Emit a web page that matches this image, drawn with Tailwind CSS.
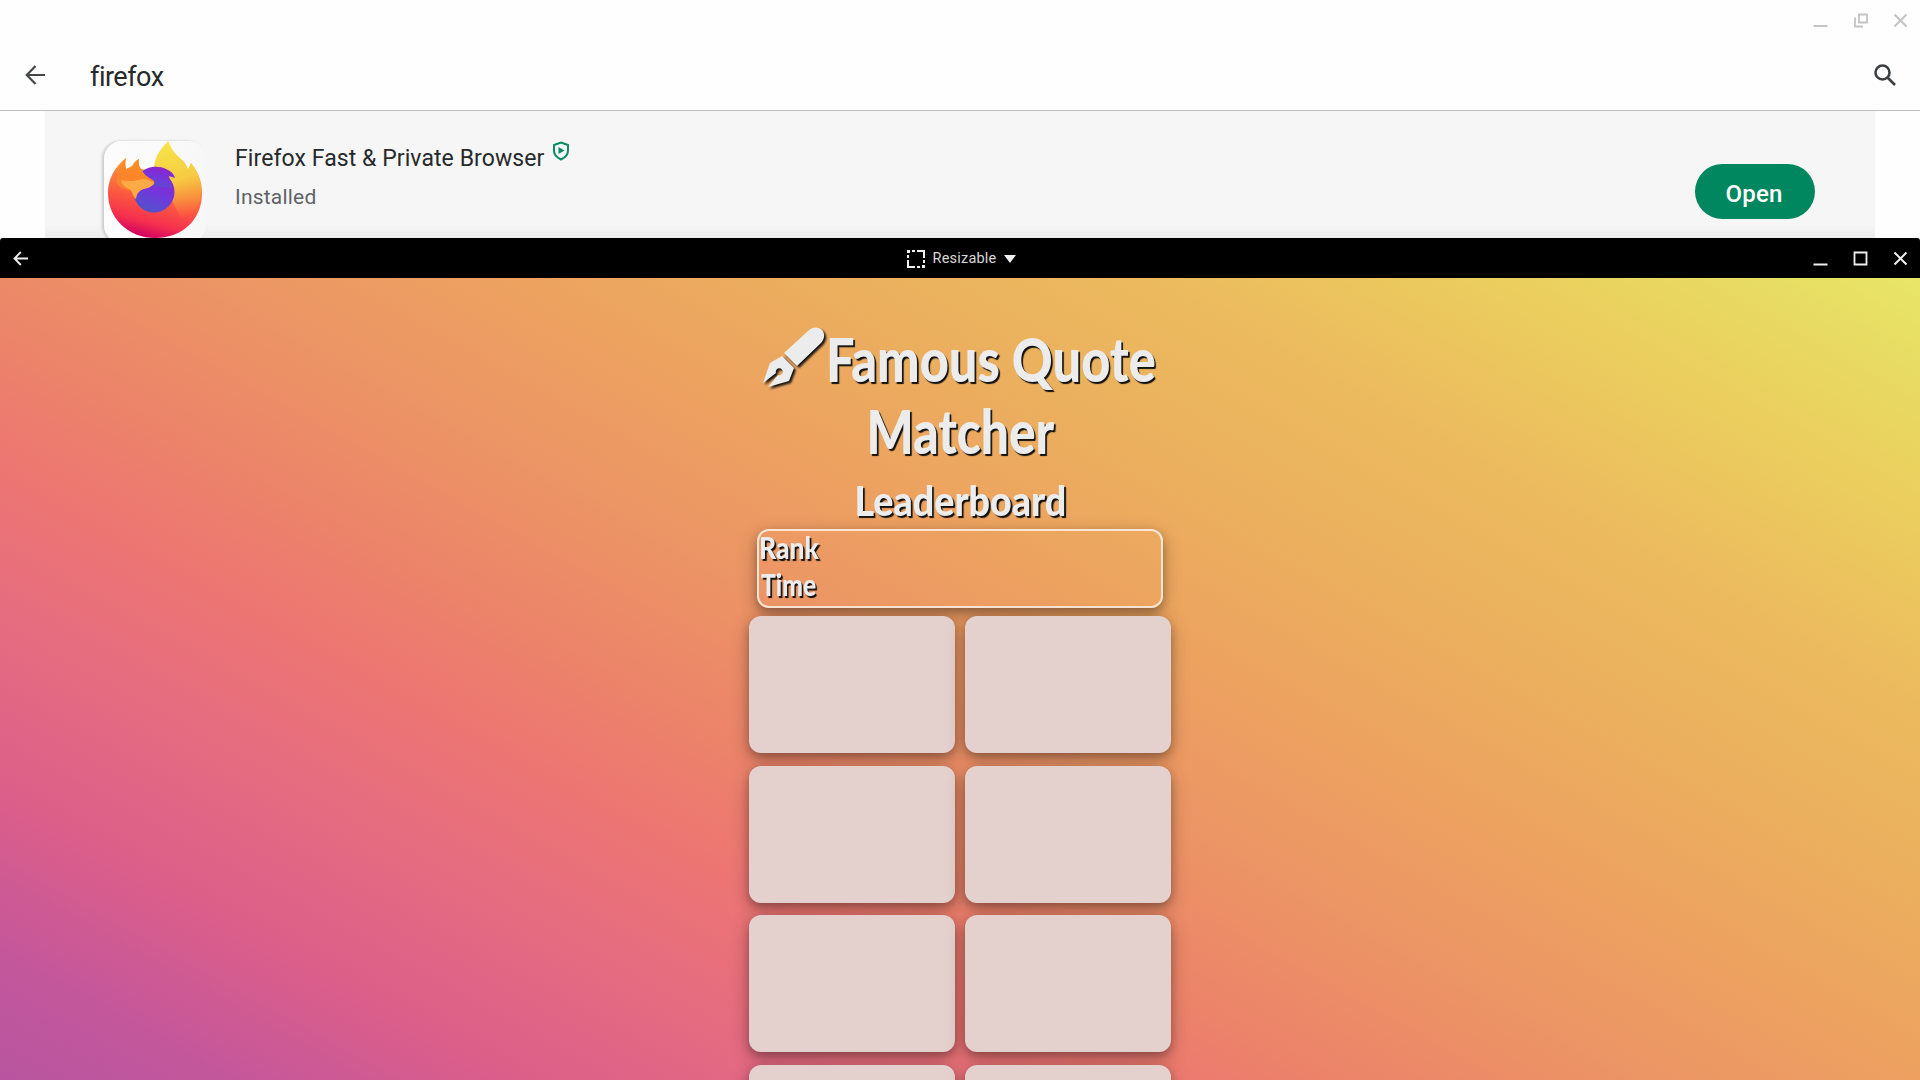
<!DOCTYPE html>
<html lang="en">
<head>
<meta charset="utf-8">
<title>Famous Quote Matcher</title>
<script src="https://cdn.jsdelivr.net/npm/@tailwindcss/browser@4"></script>
</head>
<body class="w-[1920px] h-[1080px] overflow-hidden bg-[#fefefe] font-['Roboto',sans-serif] flex flex-col">
  <section class="h-[238px] shrink-0 flex flex-col overflow-hidden">
    <div class="h-10 shrink-0 flex justify-end text-[#c4c4c4]">
      <svg class="w-10 h-10" viewBox="0 0 40 40" fill="none" stroke="currentColor" stroke-width="2"><path d="M13.500 26h14"/></svg>
      <svg class="w-10 h-10" viewBox="0 0 40 40" fill="none" stroke="currentColor" stroke-width="1.800"><path d="M19 14.500h8v8h-8zM15 17.500v9h8"/></svg>
      <svg class="w-10 h-10" viewBox="0 0 40 40" fill="none" stroke="currentColor" stroke-width="2"><path d="M14.500 14.500l12 12M26.500 14.500l-12 12"/></svg>
    </div>
    <div class="h-[71px] shrink-0 flex items-center justify-between border-b border-[#bdbdbd] pl-[25px] pr-[23px] pb-1">
      <div class="flex items-center">
        <svg class="w-[21px] h-[20px] mt-[3px]" viewBox="0 0 21 20" fill="none" stroke="#444746" stroke-width="2.200"><path d="M20 10H2M10.500 1L1.800 10l8.700 9"/></svg>
        <span class="ml-[44px] mt-[7px] text-[27px] leading-8 text-[#27292b] tracking-[-0.500px]">firefox</span>
      </div>
      <svg class="w-[24px] h-[24px] mt-[3px]" viewBox="0 0 24 24" fill="none" stroke="#3c4043" stroke-width="2.600"><circle cx="9.500" cy="9.500" r="7"/><path d="M14.500 14.500l7.500 7.500"/></svg>
    </div>
    <div class="mx-[45px] flex-1 bg-gradient-to-b from-[#f6f6f6] from-85% to-[#e9e9e9] flex pl-[59px] pr-[60px]">
      <div class="mt-[30px] w-[102px] h-[102px] shrink-0 rounded-[18px] bg-gradient-to-r from-[#fdfdfd] to-[#f7f7f7] shadow-[-2px_0_3px_rgba(0,0,0,0.180)]">
        <svg class="w-[102px] h-[102px]" viewBox="0 0 102 102">
          <defs>
            <linearGradient id="body" x1="0.700" y1="0" x2="0.450" y2="1"><stop offset="0" stop-color="#fbe040"/><stop offset="0.350" stop-color="#fb963a"/><stop offset="0.650" stop-color="#fb5640"/><stop offset="0.850" stop-color="#f5304f"/><stop offset="1" stop-color="#d4045f"/></linearGradient>
            <linearGradient id="flame" x1="0.300" y1="0" x2="0.500" y2="1"><stop offset="0" stop-color="#f7e448"/><stop offset="0.500" stop-color="#f6cc42"/><stop offset="1" stop-color="#f89a3d" stop-opacity="0"/></linearGradient>
            <linearGradient id="globe" x1="0.700" y1="0" x2="0.300" y2="1"><stop offset="0" stop-color="#8f22c8"/><stop offset="0.500" stop-color="#7436dd"/><stop offset="1" stop-color="#4e54c8"/></linearGradient>
            <linearGradient id="head" x1="0.200" y1="0" x2="0" y2="1"><stop offset="0" stop-color="#fb8d22"/><stop offset="1" stop-color="#fb7a35"/></linearGradient>
          </defs>
          <path fill="url(#body)" d="M22 17c-1 4-1 7 0 11l6-3c2-4 4-6 7-7-1 4 0 8 2 10l17 3 10-31c3 9 8 14 15 20 2 2 4 5 5 9l3-7c7 9 11 18 11 30C98 80 77 97 51 97S4 78 4 52c0-14 7-27 18-35z"/>
          <path fill="url(#flame)" d="M64 0c3 9 8 14 15 20 2 2 4 5 5 9l3-7c7 9 11 18 10 30-2 14-9 23-18 28L50 27C51 14 57 8 64 0z"/>
          <circle cx="50" cy="51" r="20.500" fill="url(#globe)"/>
          <path fill="url(#globe)" d="M35 34c6-9 19-10 27-6 5 2 8 5 9 9l-6-2 3 12-27-3z"/>
          <path fill="url(#head)" d="M22 17c-1 4-1 7 0 11l6-1c2-4 4-7 7-9-1 4 0 8 2 10 2 4 5 7 10 10 3 1 4 3 3 5-4 4-9 4-13 6-3 2-5 5-5 9-5-4-3-9-8-9-5-1-9-3-12-8 2-10 5-18 10-24z"/>
          <path fill="#fcaa45" d="M17 39c8 2 14 1 22-1 4 0 8 2 11 4-3 5-8 5-13 7-3 2-5 5-5 9-4-4-3-8-7-10-4-2-7-4-8-9z"/>
        </svg>
      </div>
      <div class="ml-[29px] mt-[30px] flex-1 whitespace-nowrap">
        <div class="flex items-start">
          <span class="text-[23px] leading-[36px] text-[#27292b] tracking-[0.080px]">Firefox Fast &amp; Private Browser</span>
          <svg class="ml-2 w-[18px] h-[20px]" viewBox="0 0 18 20"><path d="M9 1.500L16 4v5.500c0 4-2.700 7-7 9-4.300-2-7-5-7-9V4z" fill="none" stroke="#0c8a66" stroke-width="2"/><path d="M6.500 6v7l6-3.500z" fill="#0c8a66"/></svg>
        </div>
        <div class="mt-[2px] text-[21px] leading-[36px] text-[#5f6368] tracking-[0.200px]">Installed</div>
      </div>
      <button class="mt-[53px] w-[120px] h-[55px] rounded-full bg-[#01875f] text-white text-[24px] font-medium pt-[4px] pr-[2px] tracking-[0.200px]">Open</button>
    </div>
  </section>

  <header class="h-10 shrink-0 bg-black text-[#f0f0f0] grid grid-cols-3 items-center rounded-t-[3px]">
    <svg class="w-10 h-10" viewBox="0 0 40 40" fill="none" stroke="currentColor" stroke-width="1.800"><path d="M28 20.500H15M20.800 14l-6.300 6.500 6.300 6.500"/></svg>
    <div class="flex items-center justify-center gap-2 pl-[3px] pt-px">
      <svg class="w-[18px] h-[18px]" viewBox="0 0 18 18" fill="currentColor"><path d="M0 0h3v3H0zM5 0h3v2H5zM10 0h8v8h-2V2h-6zM0 5h2v3H0zM0 10h2v6h6v2H0zM10 16h3v2h-3zM15 15h3v3h-3zM16 10h2v3h-2z"/></svg>
      <span class="text-[14.500px] leading-5 tracking-[0.200px] text-[#d8d8d8]">Resizable</span>
      <svg class="w-3 h-2" viewBox="0 0 12 8" fill="currentColor"><path d="M0 0h12L6 8z"/></svg>
    </div>
    <div class="flex justify-end">
      <svg class="w-10 h-10" viewBox="0 0 40 40" fill="none" stroke="currentColor" stroke-width="2"><path d="M13.500 26.500h14"/></svg>
      <svg class="w-10 h-10" viewBox="0 0 40 40" fill="none" stroke="currentColor" stroke-width="1.800"><path d="M14.500 14.500h12v12h-12z"/></svg>
      <svg class="w-10 h-10" viewBox="0 0 40 40" fill="none" stroke="currentColor" stroke-width="2"><path d="M14.500 14.500l12 12M26.500 14.500l-12 12"/></svg>
    </div>
  </header>

  <main class="h-[802px] shrink-0 overflow-hidden flex flex-col items-center bg-[linear-gradient(29deg,#b855a0_0%,#c4579b_7%,#db5e8a_15%,#e56b81_24%,#ed7672_33%,#ec8469_40%,#ec9565_49%,#eda260_58%,#ebb05e_68%,#ecba5e_77%,#ebcf5e_88%,#e8da62_94%,#e8e668_100%)] font-['Lato',sans-serif] font-black text-[#ececec] [text-shadow:2px_2px_1px_#111]">
    <h1 class="mt-[46px] flex flex-col items-center whitespace-nowrap text-[60px] leading-[70px]">
      <span class="flex items-center">
        <svg class="-mt-1 -ml-0.5 mr-0.5 w-[62px] h-[62px] overflow-visible drop-shadow-[2px_2px_1px_#111]" viewBox="0 0 62 62" fill="currentColor"><path d="M45 5c5-5 11-4 14-1 3 3 3 9-1 13L34 40 21 27z"/><path fill-rule="evenodd" d="M19 30l12 12-5 13L5 61l10-12a3.500 3.500 0 1 0-2-2L0 57l7-20z"/></svg>
        <span class="w-[328px] flex justify-center"><span class="scale-x-[0.842]">Famous Quote</span></span>
      </span>
      <span class="relative top-0.5 scale-x-[0.827]">Matcher</span>
    </h1>
    <h2 class="text-[41px] leading-[50px] mt-[12px] scale-x-[0.918]">Leaderboard</h2>
    <div class="mt-[3px] w-[406px] h-[79px] shrink-0 rounded-xl border-2 border-[#fbe6d6] shadow-[0_4px_8px_rgba(0,0,0,0.250),0_6px_20px_rgba(0,0,0,0.240)] text-[30px] leading-[37px]">
      <div class="-mt-[2px] origin-left scale-x-[0.880]">Rank</div>
      <div class="ml-[2px] origin-left scale-x-[0.820]">Time</div>
    </div>
    <div class="mt-2 grid grid-cols-[206px_206px] gap-x-[10px] gap-y-[12.600px] *:h-[137px] *:rounded-xl *:bg-[#e4d0cd] *:shadow-[0_4px_8px_rgba(0,0,0,0.250),0_6px_20px_rgba(0,0,0,0.240)]">
      <div></div><div></div><div></div><div></div><div></div><div></div><div></div><div></div>
    </div>
  </main>
</body>
</html>
